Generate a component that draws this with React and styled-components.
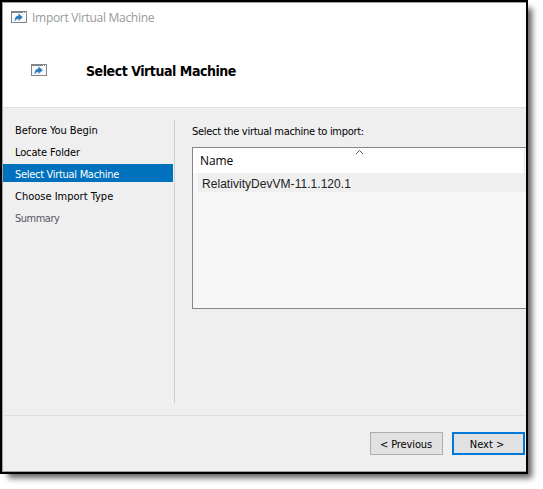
import styled, { createGlobalStyle } from 'styled-components'

const GlobalStyle = createGlobalStyle`
	* {
		box-sizing: border-box;
	}

	body {
		margin: 0;
		min-height: 100vh;
		background: #fff;
	}
`
const Window = styled.div`
	display: flex;
	flex-direction: column;
	width: 528px;
	height: 474px;
	border: 2px solid #000;
	background: #efefef;
	box-shadow: 6px 6px 6px -2px rgba(0, 0, 0, 0.62);
	font-family: 'DejaVu Sans Condensed', 'DejaVu Sans', sans-serif;
	font-stretch: condensed;
	font-size: 11px;
	color: #000;
	white-space: nowrap;
`
const Frame = styled.div`
	display: flex;
	flex-direction: column;
	flex: 1;
	border: 1px solid #a0a0a0;
	border-right: none;
	overflow: hidden;
`
const Header = styled.header`
	height: 105px;
	background: #fff;
	border-bottom: 1px solid #dfdfdf;
`
const TitleBar = styled.div`
	display: flex;
	align-items: center;
	height: 28px;
	padding-left: 8px;
	gap: 5px;
	font-family: 'Open Sans', sans-serif;
	font-stretch: normal;
	font-size: 12px;
	line-height: 18px;
	color: #999;
`
const Caption = styled.div`
	margin-top: 2px;
`
const Heading = styled.div`
	display: flex;
	align-items: center;
	height: 78px;
	padding-left: 28px;
	gap: 39px;
`
const Title = styled.h1`
	margin: 2px 0 0;
	font-size: 14px;
	font-weight: bold;
`
const Text = styled.span`
	letter-spacing: ${(props) => props.$spacing || 0}px;
`
const Content = styled.div`
	display: flex;
	height: 308px;
	border-bottom: 1px solid #dfdfdf;
`
const Steps = styled.nav`
	width: 172px;
	height: 283px;
	margin-top: 12px;
	padding-right: 1px;
	border-right: 1px solid #cdcdcd;
`
const Step = styled.div`
	height: 18px;
	margin-bottom: 4px;
	padding-left: 12px;
	line-height: 21px;
	background: ${(props) => (props.$active ? '#0071bc' : 'transparent')};
	color: ${(props) =>
		props.$active ? '#fff' : props.$muted ? '#565666' : '#000'};
`
const Main = styled.main`
	flex: 1;
	padding: 14px 0 0 17px;
`
const Prompt = styled.div`
	height: 25px;
	line-height: 19px;
`
const List = styled.div`
	height: 162px;
	border: 1px solid #828790;
	border-right: none;
	background: #f7f7f7;
`
const ListHeader = styled.div`
	position: relative;
	height: 25px;
	margin-right: 1px;
	padding-left: 7px;
	border-right: 1px solid #e5e5e5;
	background: #fff;
	font-family: 'Open Sans', sans-serif;
	font-stretch: normal;
	font-size: 12px;
	line-height: 26px;
`
const SortMark = styled.svg`
	position: absolute;
	left: 162px;
	top: 1px;
`
const ListRow = styled.div`
	height: 19px;
	margin-left: 5px;
	padding-left: 4px;
	background: #efefef;
	font-family: 'Liberation Sans', sans-serif;
	font-stretch: normal;
	font-size: 12px;
	line-height: 22px;
	color: #222;
`
const Footer = styled.footer`
	display: flex;
	padding: 16px 0 0 367px;
	gap: 9px;
`
const Button = styled.button`
	width: 73px;
	height: 23px;
	padding: ${(props) => (props.$primary ? '1px 3px 0 0' : '2px 1px 0 0')};
	border: ${(props) => (props.$primary ? '2px solid #0078d7' : '1px solid #adadad')};
	background: #e1e1e1;
	font: inherit;
	color: #000;
`
const ImportIcon = () => (
	<svg width='16' height='12' viewBox='0 0 16 12'>
		<rect x='.5' y='.5' width='15' height='11' fill='#f8fafc' stroke='#80858b' />
		<path d='M0 1h16' stroke='#80858b' strokeWidth='2' />
		<path d='M12 1.5h1M14 1.5h1' stroke='#fff' />
		<path
			d='M3.8 10C3.8 6.5 5.2 4.8 7.6 4.7V2.8L11.6 6.2 7.6 9.6V7.8C6 7.8 4.8 8.4 3.8 10Z'
			fill='#2879bd'
			stroke='#2879bd'
			strokeWidth='.3'
		/>
	</svg>
)

const steps = [
	{ label: 'Before You Begin', spacing: -0.07 },
	{ label: 'Locate Folder', spacing: -0.13 },
	{ label: 'Select Virtual Machine', spacing: -0.3, active: true },
	{ label: 'Choose Import Type', spacing: 0 },
	{ label: 'Summary', spacing: -0.5, muted: true },
]

const App = () => {
	return (
		<>
			<GlobalStyle />
			<Window>
				<Frame>
					<Header>
						<TitleBar>
							<ImportIcon />
							<Caption>
								<Text $spacing={-0.29}>Import Virtual Machine</Text>
							</Caption>
						</TitleBar>
						<Heading>
							<ImportIcon />
							<Title>
								<Text $spacing={-0.45}>Select Virtual Machine</Text>
							</Title>
						</Heading>
					</Header>
					<Content>
						<Steps>
							{steps.map((step) => (
								<Step key={step.label} $active={step.active} $muted={step.muted}>
									<Text $spacing={step.spacing}>{step.label}</Text>
								</Step>
							))}
						</Steps>
						<Main>
							<Prompt>
								<Text $spacing={-0.29}>Select the virtual machine to import:</Text>
							</Prompt>
							<List>
								<ListHeader>
									<Text $spacing={-0.1}>Name</Text>
									<SortMark width='9' height='6' viewBox='0 0 9 6'>
										<path d='M1 5l3.5-3.5L8 5' fill='none' stroke='#555' />
									</SortMark>
								</ListHeader>
								<ListRow>
									<Text $spacing={0.04}>RelativityDevVM-11.1.120.1</Text>
								</ListRow>
							</List>
						</Main>
					</Content>
					<Footer>
						<Button>
							<Text $spacing={-0.1}>&lt; Previous</Text>
						</Button>
						<Button $primary>
							<Text>Next &gt;</Text>
						</Button>
					</Footer>
				</Frame>
			</Window>
		</>
	)
}

export default App
